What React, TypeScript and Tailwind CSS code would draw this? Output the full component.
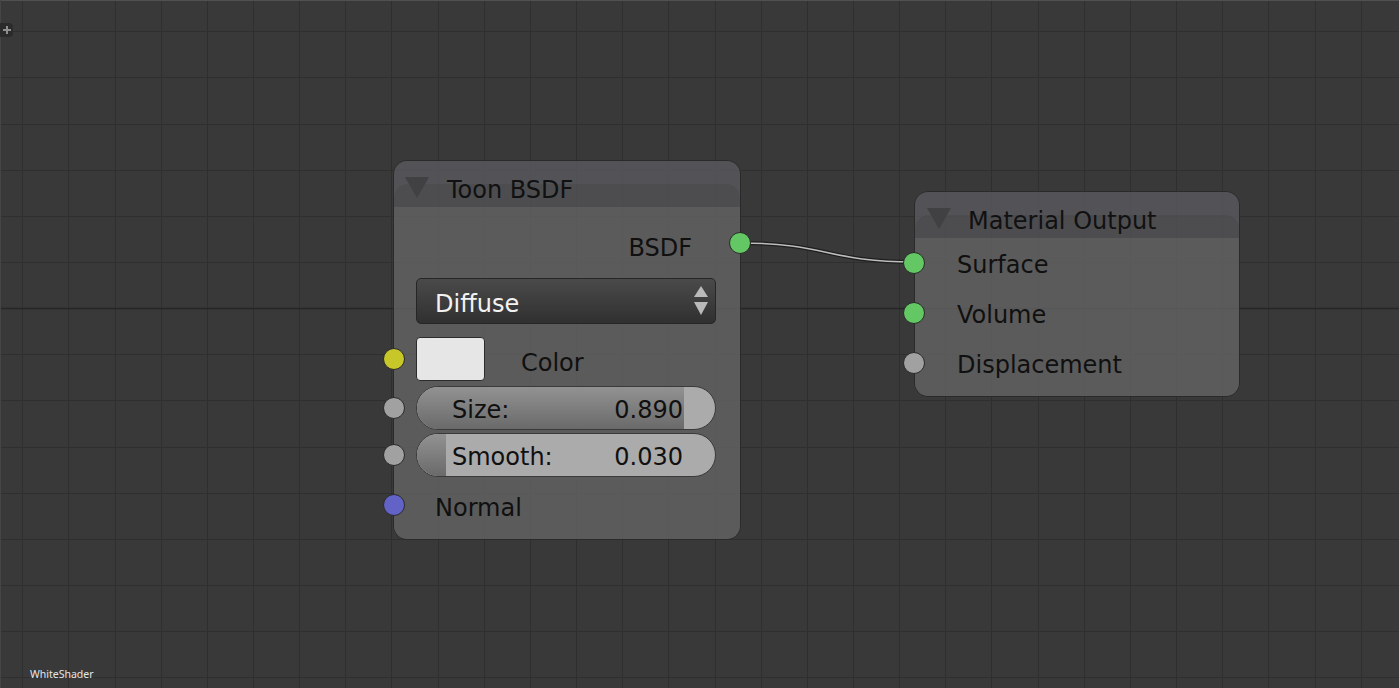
const GRID = 46.15;

const sockets = {
  shader: 'bg-[#63c763]',
  color: 'bg-[#c7c729]',
  value: 'bg-[#a1a1a1]',
  vector: 'bg-[#6363c7]',
};

type SocketKind = keyof typeof sockets;

function Socket({ kind, className = '' }: { kind: SocketKind; className?: string }) {
  return (
    <div
      className={`h-[22px] w-[22px] shrink-0 rounded-full border border-[#2a2a2a] ${sockets[kind]} ${className}`}
    />
  );
}

function Collapse() {
  return (
    <svg width="24" height="22" viewBox="0 0 24 22" className="shrink-0">
      <polygon points="0,0 24,0 12,21" fill="#414143" />
    </svg>
  );
}

function Header({ title, pl, gap }: { title: string; pl: string; gap: string }) {
  return (
    <div className={`relative flex h-[46px] items-center rounded-t-[13px] bg-[#5a5a5f]/80 pt-2 ${pl}`}>
      <div className="absolute inset-x-0 bottom-0 h-[23px] rounded-t-[14px] bg-black/[0.07]" />
      <div className="relative">
        <Collapse />
      </div>
      <span className={`relative pt-[3px] text-[24px] leading-none text-[#111] ${gap}`}>{title}</span>
    </div>
  );
}

function Slider({ label, value, fill }: { label: string; value: string; fill: number }) {
  return (
    <div className="relative ml-[11px] flex h-[44px] w-[300px] items-center justify-between overflow-hidden rounded-full border border-[#3a3a3a] bg-[#ababab] pl-[35px] pr-[32px]">
      <div
        className="absolute inset-y-0 left-0 bg-[linear-gradient(to_bottom,#929292,#7e7e7e_50%,#6a6a6a)]"
        style={{ width: fill }}
      />
      <span className="relative pt-[4px]">{label}</span>
      <span className="relative pt-[4px]">{value}</span>
    </div>
  );
}

function Grid() {
  const xs: number[] = [];
  for (let x = 22.3; x < 1399; x += GRID) xs.push(Math.round(x));
  const ys: number[] = [];
  for (let y = 31.3; y < 688; y += GRID) ys.push(Math.round(y));
  return (
    <svg className="absolute inset-0" width={1399} height={688}>
      {xs.map((x) => (
        <line key={'x' + x} x1={x + 0.5} x2={x + 0.5} y1={0} y2={688} stroke="#2f2f2f" />
      ))}
      {ys.map((y) => (
        <line
          key={'y' + y}
          x1={0}
          x2={1399}
          y1={y + 0.5}
          y2={y + 0.5}
          stroke={y === 308 ? '#262626' : '#2f2f2f'}
          strokeWidth={y === 308 ? 1.3 : 1}
        />
      ))}
      <line x1={0} x2={1399} y1={0.5} y2={0.5} stroke="#505050" />
      <line x1={0.5} x2={0.5} y1={0} y2={688} stroke="#454545" />
    </svg>
  );
}

export default function App() {
  return (
    <div className="relative h-[688px] w-[1399px] overflow-hidden bg-[#393939] font-['DejaVu_Sans',sans-serif] text-[24px] text-[#101010]">
      <Grid />

      {/* add button */}
      <div className="absolute left-0 top-[23px] flex h-[14px] w-[13px] items-center justify-center rounded-r-[4px] bg-[#2b2b2b]">
        <svg width="8" height="8" viewBox="0 0 8 8">
          <rect x="3" y="0" width="2" height="8" fill="#8f8f8f" />
          <rect x="0" y="3" width="8" height="2" fill="#8f8f8f" />
        </svg>
      </div>

      {/* link */}
      <svg className="pointer-events-none absolute inset-0" width={1399} height={688}>
        <path d="M740,243 C827,243 827,262 914,262" fill="none" stroke="#1e1e1e" strokeWidth={4} />
        <path d="M740,243 C827,243 827,262 914,262" fill="none" stroke="#bdbdbd" strokeWidth={1.6} />
      </svg>

      {/* Toon BSDF */}
      <div className="absolute left-[393px] top-[160px] w-[348px] rounded-[14px] border border-[#2a2a2a]">
        <Header title="Toon BSDF" pl="pl-[11px]" gap="ml-[18px]" />
        <div className="flex flex-col rounded-b-[13px] bg-[#646464]/80 pb-3 pt-3">
          <div className="flex h-[48px] items-center justify-end">
            <span className="mr-[37px] pt-[9px]">BSDF</span>
            <Socket kind="shader" className="-mr-[11px]" />
          </div>

          <div className="ml-[22px] mt-[11px] flex h-[46px] w-[300px] items-center justify-between rounded-[5px] border border-[#262626] bg-[linear-gradient(to_bottom,#4a4a4a,#3d3d3d_50%,#303030)] pl-[18px] pr-[7px]">
            <span className="pt-[5px] text-[#f2f2f2]">Diffuse</span>
            <svg width="14" height="31" viewBox="0 0 14 31">
              <polygon points="7,0 14,11 0,11" fill="#b9b9b9" />
              <polygon points="0,16 14,16 7,29" fill="#b9b9b9" />
            </svg>
          </div>

          <div className="mt-[13px] flex h-[44px] items-center">
            <Socket kind="color" className="-ml-[11px]" />
            <div className="ml-[11px] h-[44px] w-[69px] rounded-[4px] border border-[#2c2c2c] bg-[#e6e6e6]" />
            <span className="ml-[36px] pt-[7px]">Color</span>
          </div>

          <div className="mt-[5px] flex h-[44px] items-center">
            <Socket kind="value" className="-ml-[11px]" />
            <Slider label="Size:" value="0.890" fill={267} />
          </div>

          <div className="mt-[3px] flex h-[44px] items-center">
            <Socket kind="value" className="-ml-[11px]" />
            <Slider label="Smooth:" value="0.030" fill={29} />
          </div>

          <div className="mt-[6px] flex h-[44px] items-center">
            <Socket kind="vector" className="-ml-[11px]" />
            <span className="ml-[30px] pt-[6px]">Normal</span>
          </div>
        </div>
      </div>

      {/* Material Output */}
      <div className="absolute left-[914px] top-[191px] w-[326px] rounded-[14px] border border-[#2a2a2a]">
        <Header title="Material Output" pl="pl-[12px]" gap="ml-[17px]" />
        <div className="flex flex-col rounded-b-[13px] bg-[#646464]/80 pb-2">
          {[
            ['Surface', 'shader'],
            ['Volume', 'shader'],
            ['Displacement', 'value'],
          ].map(([name, kind]) => (
            <div key={name} className="flex h-[50px] items-center">
              <Socket kind={kind as SocketKind} className="-ml-[12px]" />
              <span className="ml-[32px] pt-[4px]">{name}</span>
            </div>
          ))}
        </div>
      </div>

      <div className="absolute left-[30px] top-[667px] font-['Noto_Sans',sans-serif] text-[10.5px] text-[#e6e6e6]">
        WhiteShader
      </div>
    </div>
  );
}
